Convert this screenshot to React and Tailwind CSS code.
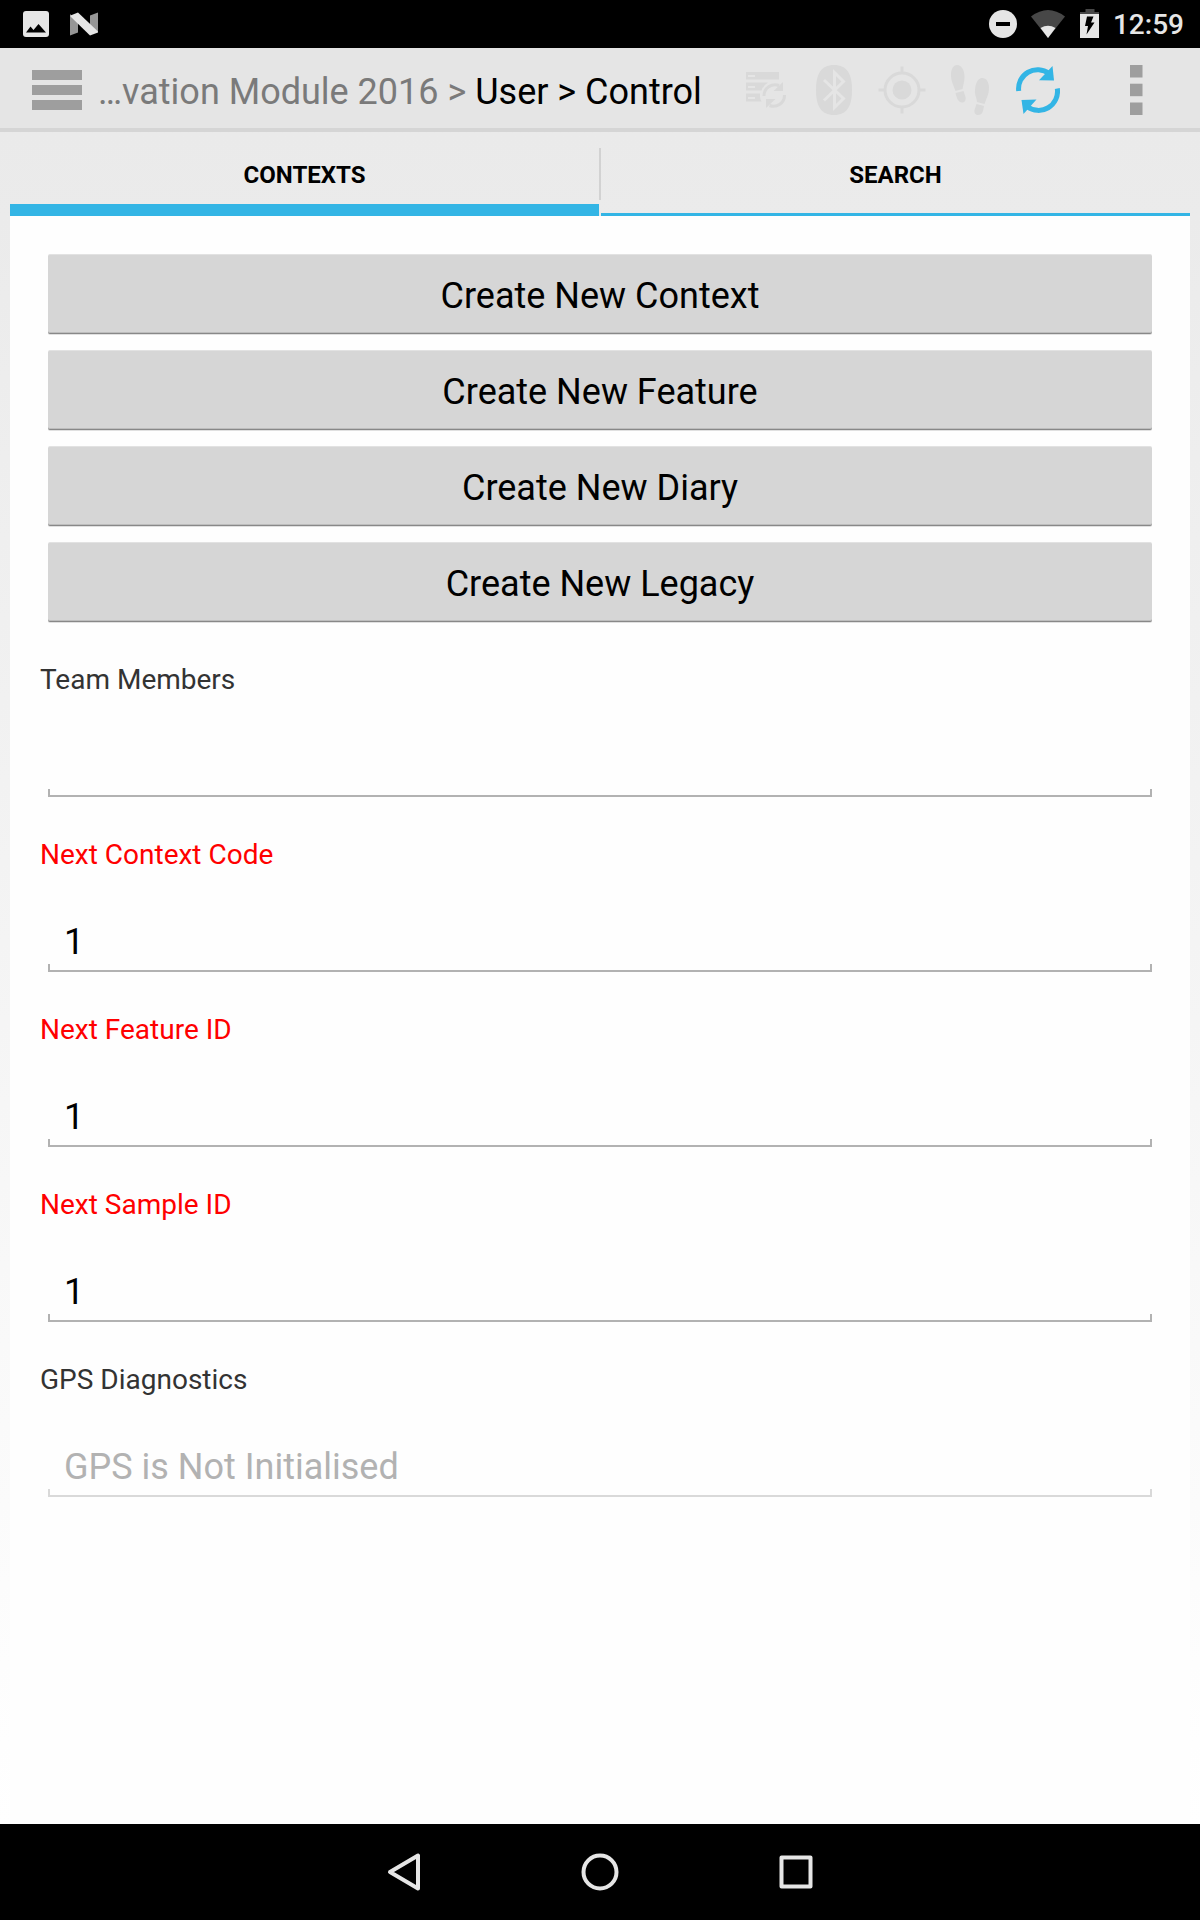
import React, { useState } from "react";

const DISABLED = "#d9d9d9";

function PictureIcon() {
  return (
    <svg width="28" height="28" viewBox="0 0 28 28" aria-hidden="true">
      <rect x="1" y="1" width="26" height="26" rx="3" fill="#e6e6e6" />
      <path d="M4 22.500L8.500 16.500L11.500 20L16.500 14L24 22.500Z" fill="#000" />
    </svg>
  );
}

function NougatIcon() {
  return (
    <svg width="28" height="28" viewBox="0 0 28 28" aria-hidden="true">
      <path d="M0 4L8 12V22.500L0 25.500Z" fill="#969696" />
      <path d="M20 5.500L28 2.500V22L20 16Z" fill="#969696" />
      <path d="M0.500 5.500L8 2.500L28 21.500V22.500L20 25.500L0.500 6.500Z" fill="#e6e6e6" />
    </svg>
  );
}

function DoNotDisturbIcon() {
  return (
    <svg width="28" height="28" viewBox="0 0 28 28" aria-hidden="true">
      <circle cx="14" cy="14" r="14" fill="#e6e6e6" />
      <rect x="7" y="12" width="14" height="4" fill="#000" />
    </svg>
  );
}

function WifiIcon() {
  return (
    <svg width="34" height="28" viewBox="0 0 34 28" aria-hidden="true">
      <path d="M0 6.500Q17 -6.500 34 6.500L17 28Z" fill="#474747" />
      <path d="M9.500 18Q17 13.500 24.500 18L17 28Z" fill="#e6e6e6" />
    </svg>
  );
}

function BatteryIcon() {
  return (
    <svg width="20" height="30" viewBox="0 0 20 30" aria-hidden="true">
      <path d="M5.500 0H14.500V3H19V6H0V3H5.500Z" fill="#474747" />
      <rect x="0" y="5" width="19" height="24" fill="#e6e6e6" />
      <path d="M7 7.500H13.500L11 13.500H14.500L6.500 25.500L8 17H5Z" fill="#000" />
    </svg>
  );
}

function RecordsSyncIcon() {
  return (
    <svg width="40" height="36" viewBox="0 0 40 36" aria-hidden="true">
      <path
        fillRule="evenodd"
        fill={DISABLED}
        d="M0 0H33V7.500H0ZM2 3V5H9V3ZM0 10.500H22Q17 13.500 15.500 18.500H0ZM2 14V16H9V14ZM0 21.500H14Q13.500 26 15.500 29.500H0ZM2 25V27H9V25Z"
      />
      <g fill="none" stroke={DISABLED} strokeWidth="3">
        <path d="M18 24A11 11 0 0 1 33 13.500" />
        <path d="M38.500 23A11 11 0 0 1 23.500 33.500" />
      </g>
      <path d="M37 10V19H27.500Z" fill={DISABLED} />
      <path d="M20 36V27H29.500Z" fill={DISABLED} />
    </svg>
  );
}

function BluetoothIcon() {
  return (
    <svg width="36" height="50" viewBox="0 0 36 50" aria-hidden="true">
      <path d="M18 0C31 0 36 9 36 25S31 50 18 50S0 41 0 25S5 0 18 0Z" fill={DISABLED} />
      <path d="M8 15L27.500 33.500L18.500 42.500V7.500L27.500 16.500L8 35.500" fill="none" stroke="#e5e5e5" strokeWidth="3" />
    </svg>
  );
}

function TargetIcon() {
  return (
    <svg width="48" height="48" viewBox="0 0 48 48" aria-hidden="true">
      <circle cx="24" cy="24" r="9.500" fill={DISABLED} />
      <circle cx="24" cy="24" r="17" fill="none" stroke={DISABLED} strokeWidth="3" />
      <path d="M24 0.500V7M24 41V47.500M0.500 24H7M41 24H47.500" stroke={DISABLED} strokeWidth="3" />
    </svg>
  );
}

function FootprintsIcon() {
  return (
    <svg width="38" height="50" viewBox="0 0 38 50" aria-hidden="true" fill={DISABLED}>
      <path d="M6 0C11 0 13.500 6 13.500 12C13.500 17 12 20 11.500 24L4.500 26C3 21 0 17 0 10C0 4 2.500 0 6 0Z" />
      <path d="M4.500 28L12.500 26L14.500 32C15 35 14 37.500 11 37.500C7.500 37.500 6 34 4.500 28Z" />
      <path d="M31 13C35.500 13 38 17 38 23C38 30 35 34 33.500 39L26 37C25.500 32 23.500 30 24 25C24.500 18 27 13 31 13Z" />
      <path d="M25.500 39L33 41L32 46C31 49 29.500 50 27 50C24 50 23 47.500 23.500 45Z" />
    </svg>
  );
}

function SyncIcon() {
  return (
    <svg width="44" height="48" viewBox="0 0 44 48" aria-hidden="true">
      <g fill="none" stroke="#33b5e5" strokeWidth="5">
        <path d="M2.700 25A19 19 0 0 1 33 7.500" />
        <path d="M41.300 22.500A19 19 0 0 1 11 40.500" />
      </g>
      <path d="M36.500 0L38 14.500L23 14.200Z" fill="#33b5e5" />
      <path d="M7.500 48L5.500 34L20.500 33.500Z" fill="#33b5e5" />
    </svg>
  );
}

function OverflowIcon() {
  return (
    <svg width="14" height="50" viewBox="0 0 14 50" aria-hidden="true" fill="#9e9e9e">
      <rect x="1" y="0" width="12.500" height="12.500" />
      <rect x="1" y="18.700" width="12.500" height="12.500" />
      <rect x="1" y="37.500" width="12.500" height="12.500" />
    </svg>
  );
}

function StatusBar() {
  return (
    <div className="flex h-12 items-center justify-between bg-black pl-[22px] pr-4">
      <div className="flex items-center gap-5">
        <PictureIcon />
        <NougatIcon />
      </div>
      <div className="flex items-center">
        <DoNotDisturbIcon />
        <span className="ml-[14px]"><WifiIcon /></span>
        <span className="ml-[15px]"><BatteryIcon /></span>
        <time className="ml-[13px] pt-[2px] text-[28px] leading-8 font-medium text-[#e6e6e6]">12:59</time>
      </div>
    </div>
  );
}

const actions = [
  { label: "Sync records", Icon: RecordsSyncIcon, disabled: true },
  { label: "Bluetooth", Icon: BluetoothIcon, disabled: true },
  { label: "GPS", Icon: TargetIcon, disabled: true },
  { label: "Track log", Icon: FootprintsIcon, disabled: true },
  { label: "Sync", Icon: SyncIcon, disabled: false },
];

function ActionBar() {
  return (
    <header className="flex h-21 items-center border-b-4 border-[#d5d5d5] bg-[#e5e5e5] pt-1">
      <button type="button" aria-label="Menu" className="ml-8 flex w-[50px] shrink-0 flex-col gap-[5px]">
        <span className="h-[10px] bg-[#9e9e9e]" />
        <span className="h-[10px] bg-[#9e9e9e]" />
        <span className="h-[10px] bg-[#9e9e9e]" />
      </button>
      <nav className="ml-4 min-w-0 flex-1 overflow-hidden pt-1 text-4xl whitespace-nowrap text-black">
        <span className="text-[#7a7a7a]">…vation Module 2016 &gt; </span>
        User &gt; Control
      </nav>
      <div className="flex shrink-0">
        {actions.map(({ label, Icon, disabled }) => (
          <button key={label} type="button" aria-label={label} disabled={disabled} className="flex h-19 w-17 items-center justify-center">
            <Icon />
          </button>
        ))}
        <button type="button" aria-label="More options" className="flex h-19 w-32 items-center justify-center">
          <OverflowIcon />
        </button>
      </div>
    </header>
  );
}

function Tab({ label, active, onSelect }) {
  return (
    <button
      type="button"
      role="tab"
      aria-selected={active}
      onClick={onSelect}
      className={
        "h-21 flex-1 text-2xl font-bold text-black " +
        (active ? "border-b-12 border-[#33b5e5] pt-[14px]" : "border-b-3 border-[#33b5e5] pt-[5px]")
      }
    >
      {label}
    </button>
  );
}

function Field({ id, label, required, value, disabled }) {
  return (
    <div>
      <label htmlFor={id} className={"block text-[28px] leading-[33px] " + (required ? "text-[#ff0000]" : "text-[#333333]")}>
        {label}
      </label>
      <div className="mx-2 mt-[37px]">
        <input
          id={id}
          type="text"
          defaultValue={value}
          disabled={disabled}
          className="block h-14 w-full bg-transparent px-4 pt-3 text-4xl text-black outline-none disabled:text-[#b2b2b2]"
        />
        <div className={"h-2 border-x-2 border-b-2 " + (disabled ? "border-[#d9d9d9]" : "border-[#b2b2b2]")} />
      </div>
    </div>
  );
}

const createLabels = ["Create New Context", "Create New Feature", "Create New Diary", "Create New Legacy"];

const fields = [
  { id: "team", label: "Team Members", value: "" },
  { id: "context", label: "Next Context Code", value: "1", required: true },
  { id: "feature", label: "Next Feature ID", value: "1", required: true },
  { id: "sample", label: "Next Sample ID", value: "1", required: true },
  { id: "gps", label: "GPS Diagnostics", value: "GPS is Not Initialised", disabled: true },
];

export default function App() {
  const [tab, setTab] = useState("contexts");
  return (
    <div className="flex min-h-screen flex-col bg-white font-['Roboto',sans-serif]">
      <StatusBar />
      <ActionBar />
      <main className="flex flex-1 flex-col bg-linear-to-b from-[#eaeaea] to-white px-[10px]">
        <div role="tablist" className="flex">
          <Tab label="CONTEXTS" active={tab === "contexts"} onSelect={() => setTab("contexts")} />
          <div className="mt-4 h-13 w-[2px] bg-[#d2d2d2]" />
          <Tab label="SEARCH" active={tab === "search"} onSelect={() => setTab("search")} />
        </div>
        <section className="flex-1 bg-[#fefefe] px-[30px] pt-[38px] pb-8">
          <div className="mx-2 flex flex-col gap-4">
            {createLabels.map((label) => (
              <button
                key={label}
                type="button"
                className="h-20 rounded-[2px] border-t border-b border-t-[#e2e2e2] border-b-[#888888] bg-[#d6d6d6] pt-1 text-4xl text-black shadow-[inset_0_-1px_#bdbdbd,0_1px_#e0e0e0]"
              >
                {label}
              </button>
            ))}
          </div>
          <div className="mt-[41px] flex flex-col gap-[41px]">
            {fields.map((field) => (
              <Field key={field.id} {...field} />
            ))}
          </div>
        </section>
      </main>
      <footer className="flex h-24 justify-center bg-black">
        <button type="button" aria-label="Back" className="flex w-49 items-center justify-center">
          <svg width="34" height="40" viewBox="0 0 34 40" fill="none" stroke="#e6e6e6" strokeWidth="4" strokeLinejoin="round" aria-hidden="true">
            <path d="M31 3.500V36.500L3 20Z" />
          </svg>
        </button>
        <button type="button" aria-label="Home" className="flex w-49 items-center justify-center">
          <svg width="40" height="40" viewBox="0 0 40 40" fill="none" stroke="#e6e6e6" strokeWidth="4" aria-hidden="true">
            <circle cx="20" cy="20" r="16.500" />
          </svg>
        </button>
        <button type="button" aria-label="Recent apps" className="flex w-49 items-center justify-center">
          <svg width="40" height="40" viewBox="0 0 40 40" fill="none" stroke="#e6e6e6" strokeWidth="4" strokeLinejoin="round" aria-hidden="true">
            <rect x="5.500" y="5.500" width="29" height="29" />
          </svg>
        </button>
      </footer>
    </div>
  );
}
